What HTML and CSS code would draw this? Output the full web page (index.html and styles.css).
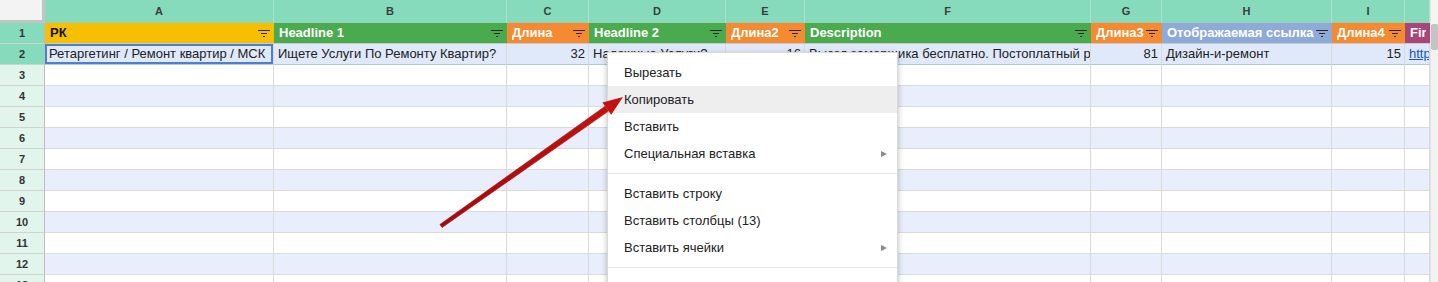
FILE: index.html
```html
<!DOCTYPE html>
<html lang="ru">
<head>
  <meta charset="UTF-8" />
  <title>Таблица</title>
  <link rel="stylesheet" href="styles.css">
</head>
<body>

<div class="screen">
  <div class="sheet">

    <!-- буквы столбцов -->
    <div class="row letters">
      <div class="corner"></div>
      <div class="letter">A</div>
      <div class="letter">B</div>
      <div class="letter">C</div>
      <div class="letter">D</div>
      <div class="letter">E</div>
      <div class="letter">F</div>
      <div class="letter">G</div>
      <div class="letter">H</div>
      <div class="letter">I</div>
      <div class="letter"></div>
    </div>

    <!-- заголовки -->
    <div class="row head">
      <div class="num hi">1</div>
      <div class="hcell yellow"><span>РК</span><svg class="filter" width="12" height="8" viewBox="0 0 12 8"><path d="M0 .5h12M3 3.5h6M5 6.5h2"/></svg></div>
      <div class="hcell green"><span>Headline 1</span><svg class="filter" width="12" height="8" viewBox="0 0 12 8"><path d="M0 .5h12M3 3.5h6M5 6.5h2"/></svg></div>
      <div class="hcell orange"><span>Длина</span><svg class="filter" width="12" height="8" viewBox="0 0 12 8"><path d="M0 .5h12M3 3.5h6M5 6.5h2"/></svg></div>
      <div class="hcell green"><span>Headline 2</span><svg class="filter" width="12" height="8" viewBox="0 0 12 8"><path d="M0 .5h12M3 3.5h6M5 6.5h2"/></svg></div>
      <div class="hcell orange"><span>Длина2</span><svg class="filter" width="12" height="8" viewBox="0 0 12 8"><path d="M0 .5h12M3 3.5h6M5 6.5h2"/></svg></div>
      <div class="hcell green"><span>Description</span><svg class="filter" width="12" height="8" viewBox="0 0 12 8"><path d="M0 .5h12M3 3.5h6M5 6.5h2"/></svg></div>
      <div class="hcell orange"><span>Длина3</span><svg class="filter" width="12" height="8" viewBox="0 0 12 8"><path d="M0 .5h12M3 3.5h6M5 6.5h2"/></svg></div>
      <div class="hcell blue"><span>Отображаемая ссылка</span><svg class="filter" width="12" height="8" viewBox="0 0 12 8"><path d="M0 .5h12M3 3.5h6M5 6.5h2"/></svg></div>
      <div class="hcell orange"><span>Длина4</span><svg class="filter" width="12" height="8" viewBox="0 0 12 8"><path d="M0 .5h12M3 3.5h6M5 6.5h2"/></svg></div>
      <div class="hcell purple"><span>Final URL</span></div>
    </div>

    <!-- строка с данными -->
    <div class="row band first">
      <div class="num hi">2</div>
      <div class="cell active">Ретаргетинг / Ремонт квартир / МСК</div>
      <div class="cell">Ищете Услуги По Ремонту Квартир?</div>
      <div class="cell right">32</div>
      <div class="cell">Надежные Услуги?</div>
      <div class="cell right">16</div>
      <div class="cell">Выезд замерщика бесплатно. Постоплатный ремонт</div>
      <div class="cell right">81</div>
      <div class="cell">Дизайн-и-ремонт</div>
      <div class="cell right">15</div>
      <div class="cell link">http://</div>
    </div>

    <div class="row"><div class="num">3</div><div class="cell"></div><div class="cell"></div><div class="cell"></div><div class="cell"></div><div class="cell"></div><div class="cell"></div><div class="cell"></div><div class="cell"></div><div class="cell"></div><div class="cell"></div></div>
    <div class="row band"><div class="num">4</div><div class="cell"></div><div class="cell"></div><div class="cell"></div><div class="cell"></div><div class="cell"></div><div class="cell"></div><div class="cell"></div><div class="cell"></div><div class="cell"></div><div class="cell"></div></div>
    <div class="row"><div class="num">5</div><div class="cell"></div><div class="cell"></div><div class="cell"></div><div class="cell"></div><div class="cell"></div><div class="cell"></div><div class="cell"></div><div class="cell"></div><div class="cell"></div><div class="cell"></div></div>
    <div class="row band"><div class="num">6</div><div class="cell"></div><div class="cell"></div><div class="cell"></div><div class="cell"></div><div class="cell"></div><div class="cell"></div><div class="cell"></div><div class="cell"></div><div class="cell"></div><div class="cell"></div></div>
    <div class="row"><div class="num">7</div><div class="cell"></div><div class="cell"></div><div class="cell"></div><div class="cell"></div><div class="cell"></div><div class="cell"></div><div class="cell"></div><div class="cell"></div><div class="cell"></div><div class="cell"></div></div>
    <div class="row band"><div class="num">8</div><div class="cell"></div><div class="cell"></div><div class="cell"></div><div class="cell"></div><div class="cell"></div><div class="cell"></div><div class="cell"></div><div class="cell"></div><div class="cell"></div><div class="cell"></div></div>
    <div class="row"><div class="num">9</div><div class="cell"></div><div class="cell"></div><div class="cell"></div><div class="cell"></div><div class="cell"></div><div class="cell"></div><div class="cell"></div><div class="cell"></div><div class="cell"></div><div class="cell"></div></div>
    <div class="row band"><div class="num">10</div><div class="cell"></div><div class="cell"></div><div class="cell"></div><div class="cell"></div><div class="cell"></div><div class="cell"></div><div class="cell"></div><div class="cell"></div><div class="cell"></div><div class="cell"></div></div>
    <div class="row"><div class="num">11</div><div class="cell"></div><div class="cell"></div><div class="cell"></div><div class="cell"></div><div class="cell"></div><div class="cell"></div><div class="cell"></div><div class="cell"></div><div class="cell"></div><div class="cell"></div></div>
    <div class="row band"><div class="num">12</div><div class="cell"></div><div class="cell"></div><div class="cell"></div><div class="cell"></div><div class="cell"></div><div class="cell"></div><div class="cell"></div><div class="cell"></div><div class="cell"></div><div class="cell"></div></div>
    <div class="row"><div class="num">13</div><div class="cell"></div><div class="cell"></div><div class="cell"></div><div class="cell"></div><div class="cell"></div><div class="cell"></div><div class="cell"></div><div class="cell"></div><div class="cell"></div><div class="cell"></div></div>
  </div>

  <div class="scrollbar">
    <div class="track-top"></div>
    <div class="thumb"></div>
  </div>

  <!-- контекстное меню -->
  <div class="menu">
    <div class="item">Вырезать</div>
    <div class="item active">Копировать</div>
    <div class="item">Вставить</div>
    <div class="item sub">Специальная вставка <i class="tri"></i></div>
    <div class="sep"></div>
    <div class="item">Вставить строку</div>
    <div class="item">Вставить столбцы (13)</div>
    <div class="item sub">Вставить ячейки <i class="tri"></i></div>
    <div class="sep"></div>
    <div class="item">Удалить строку</div>
  </div>

  <!-- стрелка -->
  <svg class="arrow" width="1438" height="282" viewBox="0 0 1438 282">
    <defs>
      <linearGradient id="red" x1="441" y1="226" x2="623" y2="97" gradientUnits="userSpaceOnUse">
        <stop offset="0" stop-color="#a00c0c"/>
        <stop offset="1" stop-color="#c21313"/>
      </linearGradient>
    </defs>
    <polygon fill="url(#red)" stroke="url(#red)" stroke-width="0.6" stroke-linejoin="round" points="442.1,227.5 439.9,224.5 605.0,106.3 608.6,111.1"/>
    <polygon fill="url(#red)" points="623,97 602.4,102.6 611.2,114.8"/>
  </svg>
</div>

</body>
</html>
```

FILE: styles.css
```css
* {
    margin: 0;
    padding: 0;
    box-sizing: border-box;
}

body {
    font-family: "Liberation Sans", Arial, Helvetica, sans-serif;
    font-size: 13px;
    color: #222;
    background: #fff;
    overflow: hidden;
}

.screen {
    position: relative;
    display: flex;
    width: 1438px;
    height: 282px;
    overflow: hidden;
}

.sheet {
    width: 1430px;
    display: flex;
    flex-direction: column;
}

.row {
    display: grid;
    grid-template-columns: 45px 229px 233px 82px 137px 79px 286px 71px 170px 73px 25px;
    height: 21px;
    flex-shrink: 0;
}

.row > div {
    border-right: 1px solid #dadada;
    border-bottom: 1px solid #dadada;
    overflow: hidden;
    white-space: nowrap;
    line-height: 20px;
}

/* буквы столбцов */
.letters {
    height: 23px;
    background: #87dbbd;
}

.letters > div {
    border-right: 1px solid #a9e3cd;
    border-bottom: 1px solid #9bcfb9;
    line-height: 22px;
}

.letters .corner {
    background: #f3f3f3;
    border-right: 3px solid #c4c4c4;
    border-bottom: 3px solid #c4c4c4;
}

.letter {
    text-align: center;
    font-size: 11px;
    font-weight: bold;
    color: #3c3c3c;
}

/* номера строк */
.row > .num {
    background: #e1f5ed;
    border-right: 1px solid #bdbdbd;
    border-bottom: 1px solid #d2d2d2;
    text-align: center;
    font-size: 11px;
    font-weight: bold;
    color: #333;
}

.row > .num.hi {
    background: #87dbbd;
}

/* строка заголовков */
.head > .hcell {
    display: flex;
    align-items: center;
    justify-content: space-between;
    padding: 0 4px 0 5px;
    font-weight: bold;
    color: #fff;
    border-right: none;
    border-bottom: 1px solid #c9c9c9;
}

.hcell span {
    overflow: hidden;
}

.filter {
    flex-shrink: 0;
    margin-top: 1px;
}

.filter path {
    stroke: #2a2a2a;
    stroke-width: 1;
    fill: none;
}

.yellow { background: #f6c000; }
.yellow span { color: #111; }
.green { background: #4aab4e; }
.orange { background: #f68a30; }
.blue { background: #8eaad8; }
.purple { background: #a8467a; }

/* ячейки */
.cell {
    padding: 0 4px;
}

.cell.right {
    text-align: right;
    padding-right: 3px;
}

.cell.link {
    color: #1155cc;
    text-decoration: underline;
    padding-left: 4px;
}

.band > .cell {
    background: #e8eefb;
}

.first > .cell {
    background: #e0e9f9;
    border-bottom-color: #b9c6dd;
}

.first > .cell.active {
    box-shadow: inset 0 0 0 2px #4a7fd6;
}

/* полоса прокрутки */
.scrollbar {
    width: 8px;
    background: #f2f2f2;
    border-left: 1px solid #e3e3e3;
}

.track-top {
    height: 24px;
    background: #f5f5f5;
}

.thumb {
    height: 26px;
    background: #c4c4c4;
    border-radius: 2px;
}

/* меню */
.menu {
    position: absolute;
    left: 607px;
    top: 52px;
    width: 291px;
    height: 260px;
    background: #fff;
    border: 1px solid rgba(0, 0, 0, 0.15);
    box-shadow: 0 2px 6px rgba(0, 0, 0, 0.25);
    padding-top: 6px;
}

.item {
    height: 27px;
    line-height: 27px;
    padding: 0 10px 0 16px;
    color: #222;
    display: flex;
    justify-content: space-between;
    align-items: center;
}

.item.active {
    background: #eeeeee;
}

.tri {
    width: 0;
    height: 0;
    border-left: 6px solid #8a8a8a;
    border-top: 3.5px solid transparent;
    border-bottom: 3.5px solid transparent;
}

.sep {
    height: 1px;
    background: #e5e5e5;
    margin: 6px 0;
}

.arrow {
    position: absolute;
    left: 0;
    top: 0;
    pointer-events: none;
}
```
